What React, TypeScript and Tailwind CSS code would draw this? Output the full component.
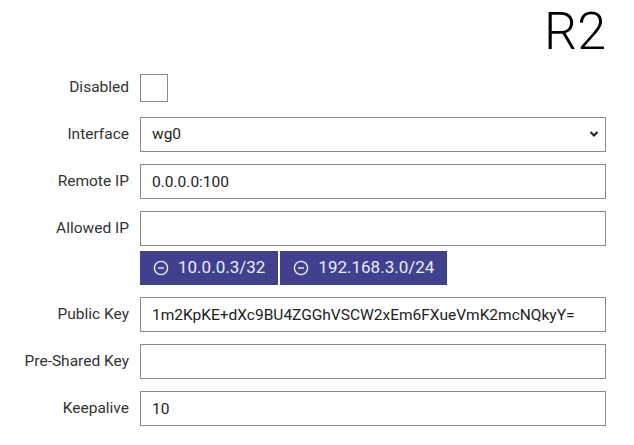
import { useState } from "react"

const FONT = "font-['Roboto',_'Liberation_Sans',_sans-serif]"

function Row({ label, children }: { label: string; children: React.ReactNode }) {
    return (
        <div className="flex items-center">
            <label className="w-[129px] shrink-0 text-right text-[15.5px] text-[#333]">{label}</label>
            <div className="ml-[11px] flex-1">{children}</div>
        </div>
    )
}

function TextInput({ value }: { value: string }) {
    return (
        <input
            defaultValue={value}
            className="block h-[35px] w-full border border-[#8a8a8a] bg-white px-[11px] text-[15.5px] text-[#222] outline-none"
        />
    )
}

function MinusCircle() {
    return (
        <svg width="16" height="16" viewBox="0 0 16 16" fill="none" stroke="currentColor" strokeWidth="1.4">
            <circle cx="8" cy="8" r="6.6" />
            <path d="M5 8h6" />
        </svg>
    )
}

export default function App() {
    const [ips] = useState(["10.0.0.3/32", "192.168.3.0/24"])

    return (
        <div className={`${FONT} w-[634px] h-[445px] bg-white pr-[28px] pt-[6px]`}>
            <h1 className="text-right text-[52px] font-light leading-[52px] text-black">R2</h1>

            <div className="mt-[13px] flex flex-col gap-[12px]">
                <Row label="Disabled">
                    <div className="flex h-[34px] items-center">
                        <div className="h-[28px] w-[28px] border border-[#8a8a8a] bg-white" />
                    </div>
                </Row>

                <Row label="Interface">
                    <div className="relative">
                        <select className="block h-[35px] w-full appearance-none border border-[#8a8a8a] bg-white px-[11px] text-[15.5px] text-[#222] outline-none">
                            <option>wg0</option>
                        </select>
                        <svg
                            className="pointer-events-none absolute right-[7px] top-[13px]"
                            width="10" height="8" viewBox="0 0 10 8" fill="none" stroke="#222" strokeWidth="2"
                        >
                            <path d="M1.5 2l3.5 3.5L8.5 2" />
                        </svg>
                    </div>
                </Row>

                <Row label="Remote IP">
                    <TextInput value="0.0.0.0:100" />
                </Row>

                <div className="flex flex-col">
                    <Row label="Allowed IP">
                        <TextInput value="" />
                    </Row>
                    <div className="ml-[140px] mt-[5px] flex gap-[2px]">
                        {ips.map((ip) => (
                            <button
                                key={ip}
                                className="flex h-[34px] items-center gap-[9px] bg-[#40408f] px-[13px] text-[17px] text-[#ecebf5]"
                            >
                                <MinusCircle />
                                {ip}
                            </button>
                        ))}
                    </div>
                </div>

                <Row label="Public Key">
                    <TextInput value="1m2KpKE+dXc9BU4ZGGhVSCW2xEm6FXueVmK2mcNQkyY=" />
                </Row>

                <Row label="Pre-Shared Key">
                    <TextInput value="" />
                </Row>

                <Row label="Keepalive">
                    <TextInput value="10" />
                </Row>
            </div>
        </div>
    )
}
